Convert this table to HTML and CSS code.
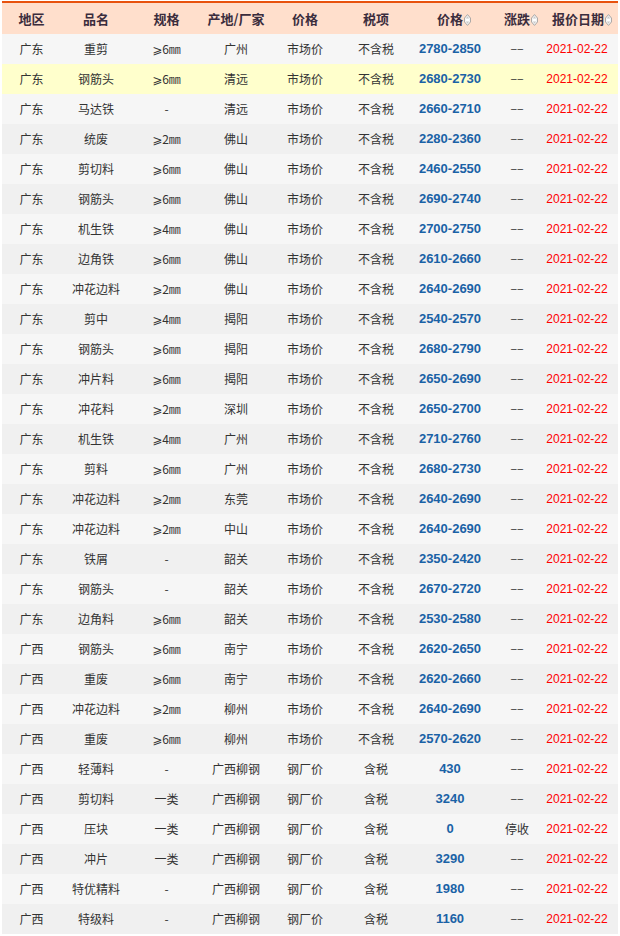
FILE: index.html
```html
<!DOCTYPE html>
<html lang="zh-CN">
<head>
<meta charset="utf-8">
<title>废钢价格</title>
<link rel="stylesheet" href="styles.css">
</head>
<body>
<table class="price-table">
  <colgroup>
    <col class="c1"><col class="c2"><col class="c3"><col class="c4"><col class="c5"><col class="c6"><col class="c7"><col class="c8"><col class="c9">
  </colgroup>
  <thead>
    <tr>
      <th>地区</th><th>品名</th><th>规格</th><th>产地/厂家</th><th>价格</th><th>税项</th>
      <th class="sortable">价格<svg class="sort" viewBox="0 0 7 12" width="7" height="12"><path d="M3.5 0.6 L6.4 4 L6.4 8 L3.5 11.4 L0.6 8 L0.6 4 Z" fill="#fff" stroke="#9a9a9a" stroke-width="0.9"/><path d="M3.5 2.2 L5.2 4.4 L1.8 4.4 Z M3.5 9.8 L5.2 7.6 L1.8 7.6 Z" fill="#c8c8c8"/></svg></th>
      <th class="sortable">涨跌<svg class="sort" viewBox="0 0 7 12" width="7" height="12"><path d="M3.5 0.6 L6.4 4 L6.4 8 L3.5 11.4 L0.6 8 L0.6 4 Z" fill="#fff" stroke="#9a9a9a" stroke-width="0.9"/><path d="M3.5 2.2 L5.2 4.4 L1.8 4.4 Z M3.5 9.8 L5.2 7.6 L1.8 7.6 Z" fill="#c8c8c8"/></svg></th>
      <th class="last">报价日期<svg class="sort" viewBox="0 0 7 12" width="7" height="12"><path d="M3.5 0.6 L6.4 4 L6.4 8 L3.5 11.4 L0.6 8 L0.6 4 Z" fill="#fff" stroke="#9a9a9a" stroke-width="0.9"/><path d="M3.5 2.2 L5.2 4.4 L1.8 4.4 Z M3.5 9.8 L5.2 7.6 L1.8 7.6 Z" fill="#c8c8c8"/></svg></th>
    </tr>
  </thead>
  <tbody id="rows">
    <tr><td>广东</td><td>重剪</td><td class="spec">⩾6㎜</td><td>广州</td><td>市场价</td><td>不含税</td><td class="price">2780-2850</td><td class="chg">––</td><td class="date">2021-02-22</td></tr>
    <tr class="hover"><td>广东</td><td>钢筋头</td><td class="spec">⩾6㎜</td><td>清远</td><td>市场价</td><td>不含税</td><td class="price">2680-2730</td><td class="chg">––</td><td class="date">2021-02-22</td></tr>
    <tr><td>广东</td><td>马达铁</td><td class="spec">-</td><td>清远</td><td>市场价</td><td>不含税</td><td class="price">2660-2710</td><td class="chg">––</td><td class="date">2021-02-22</td></tr>
    <tr><td>广东</td><td>统废</td><td class="spec">⩾2㎜</td><td>佛山</td><td>市场价</td><td>不含税</td><td class="price">2280-2360</td><td class="chg">––</td><td class="date">2021-02-22</td></tr>
    <tr><td>广东</td><td>剪切料</td><td class="spec">⩾6㎜</td><td>佛山</td><td>市场价</td><td>不含税</td><td class="price">2460-2550</td><td class="chg">––</td><td class="date">2021-02-22</td></tr>
    <tr><td>广东</td><td>钢筋头</td><td class="spec">⩾6㎜</td><td>佛山</td><td>市场价</td><td>不含税</td><td class="price">2690-2740</td><td class="chg">––</td><td class="date">2021-02-22</td></tr>
    <tr><td>广东</td><td>机生铁</td><td class="spec">⩾4㎜</td><td>佛山</td><td>市场价</td><td>不含税</td><td class="price">2700-2750</td><td class="chg">––</td><td class="date">2021-02-22</td></tr>
    <tr><td>广东</td><td>边角铁</td><td class="spec">⩾6㎜</td><td>佛山</td><td>市场价</td><td>不含税</td><td class="price">2610-2660</td><td class="chg">––</td><td class="date">2021-02-22</td></tr>
    <tr><td>广东</td><td>冲花边料</td><td class="spec">⩾2㎜</td><td>佛山</td><td>市场价</td><td>不含税</td><td class="price">2640-2690</td><td class="chg">––</td><td class="date">2021-02-22</td></tr>
    <tr><td>广东</td><td>剪中</td><td class="spec">⩾4㎜</td><td>揭阳</td><td>市场价</td><td>不含税</td><td class="price">2540-2570</td><td class="chg">––</td><td class="date">2021-02-22</td></tr>
    <tr><td>广东</td><td>钢筋头</td><td class="spec">⩾6㎜</td><td>揭阳</td><td>市场价</td><td>不含税</td><td class="price">2680-2790</td><td class="chg">––</td><td class="date">2021-02-22</td></tr>
    <tr><td>广东</td><td>冲片料</td><td class="spec">⩾6㎜</td><td>揭阳</td><td>市场价</td><td>不含税</td><td class="price">2650-2690</td><td class="chg">––</td><td class="date">2021-02-22</td></tr>
    <tr><td>广东</td><td>冲花料</td><td class="spec">⩾2㎜</td><td>深圳</td><td>市场价</td><td>不含税</td><td class="price">2650-2700</td><td class="chg">––</td><td class="date">2021-02-22</td></tr>
    <tr><td>广东</td><td>机生铁</td><td class="spec">⩾4㎜</td><td>广州</td><td>市场价</td><td>不含税</td><td class="price">2710-2760</td><td class="chg">––</td><td class="date">2021-02-22</td></tr>
    <tr><td>广东</td><td>剪料</td><td class="spec">⩾6㎜</td><td>广州</td><td>市场价</td><td>不含税</td><td class="price">2680-2730</td><td class="chg">––</td><td class="date">2021-02-22</td></tr>
    <tr><td>广东</td><td>冲花边料</td><td class="spec">⩾2㎜</td><td>东莞</td><td>市场价</td><td>不含税</td><td class="price">2640-2690</td><td class="chg">––</td><td class="date">2021-02-22</td></tr>
    <tr><td>广东</td><td>冲花边料</td><td class="spec">⩾2㎜</td><td>中山</td><td>市场价</td><td>不含税</td><td class="price">2640-2690</td><td class="chg">––</td><td class="date">2021-02-22</td></tr>
    <tr><td>广东</td><td>铁屑</td><td class="spec">-</td><td>韶关</td><td>市场价</td><td>不含税</td><td class="price">2350-2420</td><td class="chg">––</td><td class="date">2021-02-22</td></tr>
    <tr><td>广东</td><td>钢筋头</td><td class="spec">-</td><td>韶关</td><td>市场价</td><td>不含税</td><td class="price">2670-2720</td><td class="chg">––</td><td class="date">2021-02-22</td></tr>
    <tr><td>广东</td><td>边角料</td><td class="spec">⩾6㎜</td><td>韶关</td><td>市场价</td><td>不含税</td><td class="price">2530-2580</td><td class="chg">––</td><td class="date">2021-02-22</td></tr>
    <tr><td>广西</td><td>钢筋头</td><td class="spec">⩾6㎜</td><td>南宁</td><td>市场价</td><td>不含税</td><td class="price">2620-2650</td><td class="chg">––</td><td class="date">2021-02-22</td></tr>
    <tr><td>广西</td><td>重废</td><td class="spec">⩾6㎜</td><td>南宁</td><td>市场价</td><td>不含税</td><td class="price">2620-2660</td><td class="chg">––</td><td class="date">2021-02-22</td></tr>
    <tr><td>广西</td><td>冲花边料</td><td class="spec">⩾2㎜</td><td>柳州</td><td>市场价</td><td>不含税</td><td class="price">2640-2690</td><td class="chg">––</td><td class="date">2021-02-22</td></tr>
    <tr><td>广西</td><td>重废</td><td class="spec">⩾6㎜</td><td>柳州</td><td>市场价</td><td>不含税</td><td class="price">2570-2620</td><td class="chg">––</td><td class="date">2021-02-22</td></tr>
    <tr><td>广西</td><td>轻薄料</td><td class="spec">-</td><td>广西柳钢</td><td>钢厂价</td><td>含税</td><td class="price">430</td><td class="chg">––</td><td class="date">2021-02-22</td></tr>
    <tr><td>广西</td><td>剪切料</td><td class="spec">一类</td><td>广西柳钢</td><td>钢厂价</td><td>含税</td><td class="price">3240</td><td class="chg">––</td><td class="date">2021-02-22</td></tr>
    <tr><td>广西</td><td>压块</td><td class="spec">一类</td><td>广西柳钢</td><td>钢厂价</td><td>含税</td><td class="price">0</td><td>停收</td><td class="date">2021-02-22</td></tr>
    <tr><td>广西</td><td>冲片</td><td class="spec">一类</td><td>广西柳钢</td><td>钢厂价</td><td>含税</td><td class="price">3290</td><td class="chg">––</td><td class="date">2021-02-22</td></tr>
    <tr><td>广西</td><td>特优精料</td><td class="spec">-</td><td>广西柳钢</td><td>钢厂价</td><td>含税</td><td class="price">1980</td><td class="chg">––</td><td class="date">2021-02-22</td></tr>
    <tr><td>广西</td><td>特级料</td><td class="spec">-</td><td>广西柳钢</td><td>钢厂价</td><td>含税</td><td class="price">1160</td><td class="chg">––</td><td class="date">2021-02-22</td></tr>
  </tbody>
</table>
</body>
</html>
```

FILE: styles.css
```css
html, body {
  margin: 0;
  padding: 0;
  background: #ffffff;
}

body {
  font-family: "Noto Sans CJK SC", "Liberation Sans", sans-serif;
  color: #333333;
}

.price-table {
  margin: 1px 2px 0 2px;
  width: 616px;
  border-collapse: collapse;
  table-layout: fixed;
  border-top: 2px solid #e8520e;
}

.c1 { width: 59px; }
.c2 { width: 70px; }
.c3 { width: 71px; }
.c4 { width: 68px; }
.c5 { width: 70px; }
.c6 { width: 72px; }
.c7 { width: 76px; }
.c8 { width: 58px; }
.c9 { width: 72px; }

.price-table th {
  height: 31px;
  padding: 0;
  background: #ffdfcc;
  color: #3b2d3d;
  font-size: 13px;
  font-weight: bold;
  text-align: center;
  vertical-align: middle;
  white-space: nowrap;
  line-height: 31px;
}

.price-table th.sortable {
  padding-left: 8px;
}

.price-table th.last {
  padding: 0;
}

.sort {
  display: inline-block;
  vertical-align: -2px;
  margin-left: 1px;
}

.price-table td {
  height: 30px;
  padding: 0;
  font-size: 12px;
  line-height: 30px;
  text-align: center;
  vertical-align: middle;
  white-space: nowrap;
  color: #333333;
}

.price-table tbody tr:nth-child(odd) td {
  background: #f6f6f6;
}

.price-table tbody tr:nth-child(even) td {
  background: #f0f0f0;
}

.price-table tbody tr.hover td {
  background: #ffffcc;
}

.spec {
  font-family: "Noto Sans CJK SC", "DejaVu Sans", sans-serif;
}

.price-table td.price {
  font-family: "Liberation Sans", sans-serif;
  font-weight: bold;
  font-size: 13px;
  color: #1a62a6;
}

.price-table td.chg {
  font-family: "Liberation Sans", sans-serif;
  font-size: 10px;
  letter-spacing: 1px;
  text-indent: 1px;
}

.price-table td.date {
  font-family: "Liberation Sans", sans-serif;
  color: #ff0000;
  padding-right: 10px;
}
```
